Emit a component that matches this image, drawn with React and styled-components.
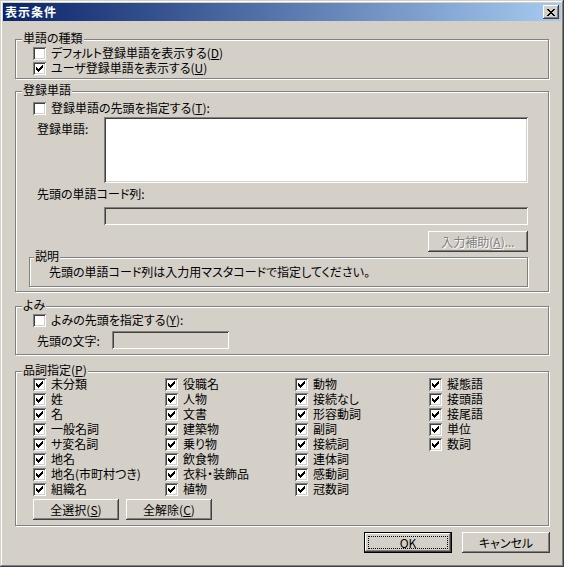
import React from 'react'
import styled, { createGlobalStyle } from 'styled-components'

const GlobalStyle = createGlobalStyle`
  html, body {
    margin: 0;
    padding: 0;
    background: #d4d0c8;
  }
  body {
    font-family: "Noto Sans CJK JP", "MS UI Gothic", sans-serif;
    font-size: 12px;
    font-feature-settings: "palt";
    color: #000;
  }
`

const raised = `
  box-shadow: inset -1px -1px #404040, inset 1px 1px #fff, inset -2px -2px #808080, inset 2px 2px #d4d0c8;
`
const sunken = `
  box-shadow: inset 1px 1px #808080, inset -1px -1px #fff, inset 2px 2px #404040, inset -2px -2px #d4d0c8;
`

const Window = styled.div`
  width: 564px;
  height: 567px;
  box-sizing: border-box;
  padding: 3px;
  background: #d4d0c8;
  box-shadow: inset -1px -1px #404040, inset 1px 1px #d4d0c8, inset -2px -2px #808080, inset 2px 2px #fff;
  display: flex;
  flex-direction: column;
`

const TitleBar = styled.div`
  height: 18px;
  flex: none;
  display: flex;
  align-items: center;
  justify-content: space-between;
  padding: 0 2px;
  background: linear-gradient(to right, #0a246a, #a6caf0);
`

const Title = styled.span`
  color: #fff;
  font-weight: bold;
  font-size: 12px;
  line-height: 18px;
  letter-spacing: 1px;
`

const CloseButton = styled.div`
  width: 16px;
  height: 14px;
  background: #d4d0c8;
  ${raised}
  display: flex;
  align-items: center;
  justify-content: center;
`

const Body = styled.div`
  padding: 18px 11px 0 12px;
  display: flex;
  flex-direction: column;
`

const Group = styled.div`
  position: relative;
  box-sizing: border-box;
  width: ${p => p.$w || 534}px;
  height: ${p => p.$h}px;
  margin-top: ${p => p.$mt || 0}px;
  padding: ${p => p.$pad || '0'};
  border: 1px solid #808080;
  box-shadow: inset 1px 1px #fff, 1px 1px #fff;
  display: flex;
  flex-direction: column;
  flex: none;
`

const Legend = styled.span`
  position: absolute;
  top: -9px;
  left: ${p => p.$left ?? 6}px;
  height: 14px;
  padding: 0 1px;
  background: #d4d0c8;
  line-height: 14px;
  white-space: nowrap;
`

const CheckRow = styled.label`
  display: flex;
  align-items: center;
  gap: 5px;
  height: 15px;
  white-space: nowrap;
  margin-left: ${p => p.$ml || 0}px;
`

const CheckText = styled.span`
  display: block;
  height: 13px;
  line-height: 11px;
`

const Box = styled.span`
  width: 13px;
  height: 13px;
  box-sizing: border-box;
  flex: none;
  background: #fff;
  ${sunken}
  display: flex;
  align-items: center;
  justify-content: center;
`

const FieldRow = styled.div`
  display: flex;
  align-items: ${p => p.$align || 'flex-start'};
  margin-top: ${p => p.$mt || 0}px;
  margin-left: ${p => p.$ml || 0}px;
`

const FieldLabel = styled.span`
  width: ${p => p.$w}px;
  flex: none;
  line-height: 15px;
  padding-top: ${p => p.$pt || 0}px;
  white-space: nowrap;
`

const TextBox = styled.div`
  box-sizing: border-box;
  width: ${p => p.$w}px;
  height: ${p => p.$h}px;
  flex: none;
  background: ${p => (p.$disabled ? '#d4d0c8' : '#fff')};
  ${sunken}
`

const Text = styled.div`
  line-height: 15px;
  white-space: nowrap;
  margin-top: ${p => p.$mt || 0}px;
  margin-left: ${p => p.$ml || 0}px;
`

const Button = styled.button`
  box-sizing: border-box;
  width: ${p => p.$w}px;
  height: 21px;
  padding: 0;
  margin: 0;
  border: ${p => (p.$default ? '1px solid #000' : 'none')};
  background: #d4d0c8;
  font: inherit;
  line-height: 15px;
  color: ${p => (p.disabled ? '#808080' : '#000')};
  text-shadow: ${p => (p.disabled ? '1px 1px #fff' : 'none')};
  ${raised}
  display: flex;
  align-items: center;
  justify-content: center;
  flex: none;
`

const FocusRing = styled.span`
  flex: 1;
  align-self: stretch;
  margin: 3px;
  border: 1px dotted #000;
  display: flex;
  align-items: center;
  justify-content: center;
`

const AssistRow = styled.div`
  display: flex;
  justify-content: flex-end;
  margin-top: 6px;
`

const PosGrid = styled.div`
  display: grid;
  grid-template-columns: 132px 130px 134px 1fr;
  grid-template-rows: repeat(8, 15px);
  grid-auto-flow: column;
`

const ButtonRow = styled.div`
  display: flex;
  gap: ${p => p.$gap || 7}px;
  margin-top: ${p => p.$mt || 0}px;
  justify-content: ${p => p.$justify || 'flex-start'};
  width: ${p => (p.$w ? p.$w + 'px' : 'auto')};
`

const CheckMark = () => (
  <svg width="7" height="7" viewBox="0 0 7 7" shapeRendering="crispEdges">
    <g fill="#000">
      <rect x="6" y="0" width="1" height="1" />
      <rect x="5" y="1" width="2" height="1" />
      <rect x="0" y="2" width="1" height="1" />
      <rect x="4" y="2" width="3" height="1" />
      <rect x="0" y="3" width="2" height="1" />
      <rect x="3" y="3" width="3" height="1" />
      <rect x="0" y="4" width="5" height="1" />
      <rect x="1" y="5" width="3" height="1" />
      <rect x="2" y="6" width="1" height="1" />
    </g>
  </svg>
)

const CloseIcon = () => (
  <svg width="8" height="7" viewBox="0 0 8 7" shapeRendering="crispEdges">
    <g fill="#000">
      <rect x="0" y="0" width="2" height="1" />
      <rect x="6" y="0" width="2" height="1" />
      <rect x="1" y="1" width="2" height="1" />
      <rect x="5" y="1" width="2" height="1" />
      <rect x="2" y="2" width="4" height="1" />
      <rect x="3" y="3" width="2" height="1" />
      <rect x="2" y="4" width="4" height="1" />
      <rect x="1" y="5" width="2" height="1" />
      <rect x="5" y="5" width="2" height="1" />
      <rect x="0" y="6" width="2" height="1" />
      <rect x="6" y="6" width="2" height="1" />
    </g>
  </svg>
)

const Check = ({ checked, children, ml }) => (
  <CheckRow $ml={ml}>
    <Box>{checked && <CheckMark />}</Box>
    <CheckText>{children}</CheckText>
  </CheckRow>
)

const partsOfSpeech = [
  '未分類', '姓', '名', '一般名詞', 'サ変名詞', '地名', '地名(市町村つき)', '組織名',
  '役職名', '人物', '文書', '建築物', '乗り物', '飲食物', '衣料・装飾品', '植物',
  '動物', '接続なし', '形容動詞', '副詞', '接続詞', '連体詞', '感動詞', '冠数詞',
  '擬態語', '接頭語', '接尾語', '単位', '数詞'
]

const App = () => {
  return <>
    <GlobalStyle />
    <Window>
      <TitleBar>
        <Title>表示条件</Title>
        <CloseButton><CloseIcon /></CloseButton>
      </TitleBar>
      <Body>
        <Group $h={40} $pad='6px 0 0 17px'>
          <Legend $left={6}>単語の種類</Legend>
          <Check>デフォルト登録単語を表示する(<u>D</u>)</Check>
          <Check checked>ユーザ登録単語を表示する(<u>U</u>)</Check>
        </Group>

        <Group $h={201} $mt={12} $pad='9px 20px 0 13px'>
          <Legend $left={6}>登録単語</Legend>
          <Check ml={4}>登録単語の先頭を指定する(<u>T</u>):</Check>
          <FieldRow $mt={1} $ml={8}>
            <FieldLabel $w={67} $pt={4}>登録単語:</FieldLabel>
            <TextBox $w={424} $h={66} />
          </FieldRow>
          <Text $mt={3} $ml={8}>先頭の単語コード列:</Text>
          <FieldRow $mt={6} $ml={75}>
            <TextBox $w={424} $h={18} $disabled />
          </FieldRow>
          <AssistRow>
            <Button $w={100} disabled>入力補助(<u>A</u>)...</Button>
          </AssistRow>
          <Group $w={499} $h={30} $mt={5} $pad='6px 0 0 19px'>
            <Legend $left={4}>説明</Legend>
            <Text>先頭の単語コード列は入力用マスタコードで指定してください。</Text>
          </Group>
        </Group>

        <Group $h={49} $mt={14} $pad='6px 0 0 17px'>
          <Legend $left={6}>よみ</Legend>
          <Check>よみの先頭を指定する(<u>Y</u>):</Check>
          <FieldRow $mt={3} $ml={4} $align='center'>
            <FieldLabel $w={75}>先頭の文字:</FieldLabel>
            <TextBox $w={117} $h={18} $disabled />
          </FieldRow>
        </Group>

        <Group $h={155} $mt={16} $pad='5px 0 0 17px'>
          <Legend $left={6}>品詞指定(<u>P</u>)</Legend>
          <PosGrid>
            {partsOfSpeech.map((name, index) => <Check key={index} checked>{name}</Check>)}
          </PosGrid>
          <ButtonRow $mt={2} $gap={7}>
            <Button $w={86}>全選択(<u>S</u>)</Button>
            <Button $w={86}>全解除(<u>C</u>)</Button>
          </ButtonRow>
        </Group>

        <ButtonRow $mt={6} $gap={10} $justify='flex-end' $w={535}>
          <Button $w={88} $default><FocusRing>OK</FocusRing></Button>
          <Button $w={88}>キャンセル</Button>
        </ButtonRow>
      </Body>
    </Window>
  </>
}

export default App
